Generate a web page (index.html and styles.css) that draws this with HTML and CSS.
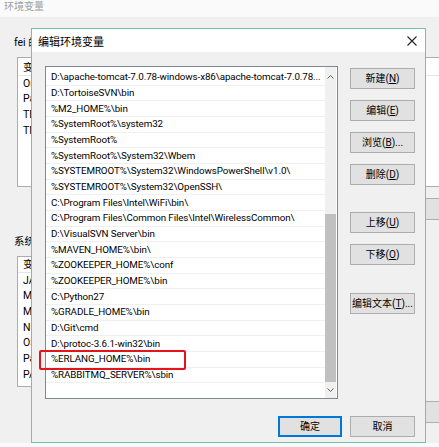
FILE: index.html
```html
<!DOCTYPE html>
<html lang="zh-CN">
<head>
<meta charset="utf-8">
<title>编辑环境变量</title>
<link rel="stylesheet" href="styles.css">
</head>
<body>
<div class="screen">
  <div class="bg-title">环境变量</div>
  <div class="bg-body">
    <div class="bg-label">fei 的用户变量(U)</div>
    <div class="bg-list user-list">
      <div class="bg-row head">变量</div>
      <div class="bg-row">OneDrive</div>
      <div class="bg-row">Path</div>
      <div class="bg-row">TEMP</div>
      <div class="bg-row">TMP</div>
    </div>
    <div class="bg-buttons"><span class="bg-btn"></span></div>
    <div class="bg-label sys">系统变量(S)</div>
    <div class="bg-list sys-list">
      <div class="bg-rows">
        <div class="bg-row head">变量</div>
        <div class="bg-row">JAVA_HOME</div>
        <div class="bg-row">M2_HOME</div>
        <div class="bg-row">MAVEN_HOME</div>
        <div class="bg-row">NUMBER_OF_PROCESSORS</div>
        <div class="bg-row">OS</div>
        <div class="bg-row">Path</div>
        <div class="bg-row">PATHEXT</div>
      </div>
      <div class="bg-scroll">
        <svg class="chev" width="7" height="4" viewBox="0 0 7 4"><path d="M0.5 3.5L3.5 0.5L6.5 3.5" stroke="#606060" fill="none"/></svg>
        <span class="bg-thumb"></span>
        <svg class="chev down" width="7" height="4" viewBox="0 0 7 4"><path d="M0.5 0.5L3.5 3.5L6.5 0.5" stroke="#606060" fill="none"/></svg>
      </div>
    </div>
    <div class="bg-buttons low"><span class="bg-btn"></span></div>
  </div>
  <div class="bg-foot"></div>

  <div class="dialog">
    <div class="dlg-title">
      <span>编辑环境变量</span>
      <svg class="close" width="10" height="10" viewBox="0 0 10 10"><path d="M0.5 0.5L9.5 9.5M9.5 0.5L0.5 9.5" stroke="#222" stroke-width="1.1" fill="none"/></svg>
    </div>
    <div class="dlg-body">
      <div class="main">
        <div class="list">
          <div class="rows">
            <div class="row">D:\apache-tomcat-7.0.78-windows-x86\apache-tomcat-7.0.78...</div>
            <div class="row">D:\TortoiseSVN\bin</div>
            <div class="row">%M2_HOME%\bin</div>
            <div class="row">%SystemRoot%\system32</div>
            <div class="row">%SystemRoot%</div>
            <div class="row">%SystemRoot%\System32\Wbem</div>
            <div class="row">%SYSTEMROOT%\System32\WindowsPowerShell\v1.0\</div>
            <div class="row">%SYSTEMROOT%\System32\OpenSSH\</div>
            <div class="row">C:\Program Files\Intel\WiFi\bin\</div>
            <div class="row">C:\Program Files\Common Files\Intel\WirelessCommon\</div>
            <div class="row">D:\VisualSVN Server\bin</div>
            <div class="row">%MAVEN_HOME%\bin\</div>
            <div class="row">%ZOOKEEPER_HOME%\conf</div>
            <div class="row">%ZOOKEEPER_HOME%\bin</div>
            <div class="row">C:\Python27</div>
            <div class="row">%GRADLE_HOME%\bin</div>
            <div class="row">D:\Git\cmd</div>
            <div class="row">D:\protoc-3.6.1-win32\bin</div>
            <div class="row">%ERLANG_HOME%\bin</div>
            <div class="row">%RABBITMQ_SERVER%\sbin</div>
          </div>
          <div class="scroll">
            <svg class="chev" width="7" height="4" viewBox="0 0 7 4"><path d="M0.5 3.5L3.5 0.5L6.5 3.5" stroke="#606060" fill="none"/></svg>
            <span class="thumb"></span>
            <svg class="chev down" width="7" height="4" viewBox="0 0 7 4"><path d="M0.5 0.5L3.5 3.5L6.5 0.5" stroke="#606060" fill="none"/></svg>
          </div>
        </div>
        <div class="side">
          <button class="btn">新建(<u>N</u>)</button>
          <button class="btn">编辑(<u>E</u>)</button>
          <button class="btn">浏览(<u>B</u>)...</button>
          <button class="btn">删除(<u>D</u>)</button>
          <button class="btn gap">上移(<u>U</u>)</button>
          <button class="btn">下移(<u>O</u>)</button>
          <button class="btn gap2">编辑文本(<u>T</u>)...</button>
        </div>
      </div>
      <div class="footer">
        <button class="btn ok">确定</button>
        <button class="btn">取消</button>
      </div>
    </div>
    <div class="mark"></div>
  </div>
</div>
</body>
</html>
```
FILE: styles.css
```css
* { box-sizing: border-box; }
html, body { margin: 0; padding: 0; }
body {
  width: 439px;
  height: 447px;
  overflow: hidden;
  background: #f0f0f0;
  font-family: Roboto, "Noto Sans CJK SC", sans-serif;
  font-size: 10.3px;
  color: #000;
}
.screen {
  position: relative;
  width: 439px;
  height: 447px;
  overflow: hidden;
  display: flex;
  flex-direction: column;
}
.bg-title {
  height: 17px;
  background: #fafafa;
  color: #a0a0a0;
  font-size: 10px;
  line-height: 14px;
  padding-left: 4px;
  flex: none;
}
.bg-body {
  flex: 1;
  background: #f0f0f0;
  padding: 18px 0 0 14px;
  display: flex;
  flex-direction: column;
}
.bg-label {
  font-size: 10.5px;
  line-height: 16px;
  height: 16px;
  white-space: nowrap;
}
.bg-label.sys { margin-top: 14px; }
.bg-list {
  margin: 6px 0 0 3px;
  width: 470px;
  background: #fff;
  border: 1px solid #acacac;
  position: relative;
}
.user-list { height: 130px; padding-top: 2px; }
.sys-list { height: 131px; padding-top: 0; width: 409px; display: flex; }
.bg-rows { flex: 1; }
.bg-row {
  height: 15.7px;
  line-height: 15.7px;
  padding-left: 5px;
  white-space: nowrap;
  font-size: 10.5px;
}
.bg-row.head { border-bottom: 1px solid #e5e5e5; }
.bg-scroll {
  width: 11px;
  display: flex;
  flex-direction: column;
  align-items: center;
  background: #f0f0f0;
  padding-top: 5px;
}
.chev { display: block; flex: none; }
.bg-thumb { display: block; width: 9px; height: 28px; background: #c8c8c8; margin-top: 29px; }
.bg-scroll .down { margin-top: auto; margin-bottom: 6px; }
.bg-buttons { display: flex; justify-content: flex-end; margin-top: 11px; width: 480px; }
.bg-buttons.low { margin-top: 14px; }
.bg-btn {
  display: block;
  width: 75px;
  height: 22px;
  border: 1px solid #adadad;
  background: #e1e1e1;
}
.bg-foot { position: absolute; left: 0; right: 0; bottom: 0; height: 4px; background: #fafafa; }

/* dialog */
.dialog {
  position: absolute;
  left: 31px;
  top: 28px;
  width: 395px;
  height: 415px;
  border: 1px solid #6ec6a4;
  background: #f0f0f0;
  display: flex;
  flex-direction: column;
}
.dlg-title {
  height: 23px;
  background: #fff;
  display: flex;
  align-items: center;
  justify-content: space-between;
  padding: 0 8px 0 6px;
  font-size: 11px;
  flex: none;
}
.dlg-body {
  flex: 1;
  padding: 14px 10px 0 13px;
  display: flex;
  flex-direction: column;
}
.main { display: flex; gap: 12px; }
.list {
  width: 293px;
  height: 333px;
  background: #fff;
  border: 1px solid #828790;
  display: flex;
}
.rows { flex: 1; padding-top: 3px; min-width: 0; }
.row {
  height: 15.68px;
  line-height: 12px;
  padding: 1.3px 0 0 5px;
  border-bottom: 1px solid #f0f0f0;
  white-space: nowrap;
  overflow: hidden;
  font-size: 9.8px;
  letter-spacing: -0.1px;
}
.scroll {
  width: 11px;
  margin-right: 1px;
  display: flex;
  flex-direction: column;
  align-items: center;
  background: #f0f0f0;
  padding-top: 8px;
}
.thumb { display: block; width: 11px; height: 168px; background: #c0c0c0; margin-top: auto; }
.scroll .down { margin: 6px 0 6px; }
.side { display: flex; flex-direction: column; gap: 11px; padding-top: 2px; }
.btn {
  width: 65px;
  height: 21px;
  padding: 0;
  border: 1px solid #adadad;
  background: #e1e1e1;
  font-family: Roboto, "Noto Sans CJK SC", sans-serif;
  font-size: 10px;
  color: #000;
  line-height: 18px;
}
.side .gap { margin-top: 16px; }
.side .gap2 { margin-top: 17px; }
.footer {
  display: flex;
  justify-content: flex-end;
  gap: 8px;
  margin-top: 17px;
}
.footer .ok { width: 64px; border: 2px solid #0078d7; }
.mark {
  position: absolute;
  left: 7px;
  top: 321px;
  width: 147px;
  height: 20px;
  border: 2px solid #e3141b;
  border-radius: 2px;
}
```
